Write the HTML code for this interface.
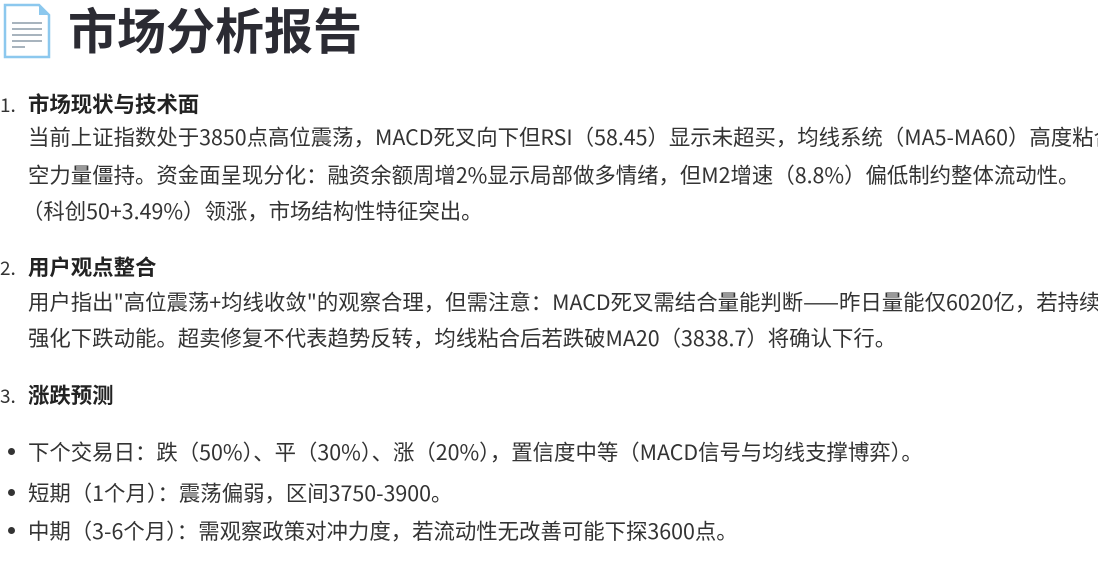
<!DOCTYPE html>
<html><head><meta charset="utf-8"><style>
html,body{margin:0;padding:0;background:#fff;width:1098px;height:572px;overflow:hidden;position:relative;}
body{font-family:"Noto Sans CJK SC","Liberation Sans",sans-serif;color:#333;}
#w{position:absolute;left:0;top:0;width:1098px;height:572px;overflow:hidden;}
.l{position:absolute;white-space:nowrap;font-size:21.4px;line-height:30px;left:28px;}
.r{right:0;overflow:hidden;}
.b{font-weight:bold;color:#222;}
.n{position:absolute;left:0;font-size:19px;line-height:30px;}
.dot{position:absolute;left:8px;width:7px;height:7px;border-radius:50%;background:#333;}
h1{position:absolute;left:68px;top:-7px;margin:0;font-size:49px;line-height:72px;font-weight:bold;color:#2b2b33;white-space:nowrap;}
</style></head><body><div id="w">
<svg style="position:absolute;left:3px;top:3px" width="48" height="56" viewBox="0 0 48 56">
<path d="M2 2 H36 L46 12 V54 H2 Z" fill="#fff" stroke="#8cc8ee" stroke-width="2.5"/>
<path d="M36 2 V12 H46 Z" fill="#8cc8ee"/>
<g stroke="#a8b4be" stroke-width="2"><line x1="9" y1="20" x2="39" y2="20"/><line x1="9" y1="26" x2="39" y2="26"/><line x1="9" y1="32" x2="39" y2="32"/><line x1="9" y1="38" x2="39" y2="38"/><line x1="9" y1="44" x2="22" y2="44"/></g>
</svg>
<h1>市场分析报告</h1>
<div class="n" style="top:90px">1.</div>
<div class="l b" style="top:89px">市场现状与技术面</div>
<div class="l r" style="top:122px">当前上证指数处于3850点高位震荡，MACD死叉向下但RSI（58.45）显示未超买，均线系统（MA5-MA60）高度粘合，多</div>
<div class="l" style="top:160px">空力量僵持。资金面呈现分化：融资余额周增2%显示局部做多情绪，但M2增速（8.8%）偏低制约整体流动性。</div>
<div class="l" style="top:196px;left:22px">（科创50+3.49%）领涨，市场结构性特征突出。</div>
<div class="n" style="top:253px">2.</div>
<div class="l b" style="top:252px">用户观点整合</div>
<div class="l r" style="top:287px">用户指出"高位震荡+均线收敛"的观察合理，但需注意：MACD死叉需结合量能判断——昨日量能仅6020亿，若持续</div>
<div class="l" style="top:323px">强化下跌动能。超卖修复不代表趋势反转，均线粘合后若跌破MA20（3838.7）将确认下行。</div>
<div class="n" style="top:381px">3.</div>
<div class="l b" style="top:380px">涨跌预测</div>
<div class="dot" style="top:448px"></div>
<div class="l" style="top:437px">下个交易日：跌（50%）、平（30%）、涨（20%），置信度中等（MACD信号与均线支撑博弈）。</div>
<div class="dot" style="top:489px"></div>
<div class="l" style="top:478px">短期（1个月）：震荡偏弱，区间3750-3900。</div>
<div class="dot" style="top:527px"></div>
<div class="l" style="top:516px">中期（3-6个月）：需观察政策对冲力度，若流动性无改善可能下探3600点。</div>
</div></body></html>
